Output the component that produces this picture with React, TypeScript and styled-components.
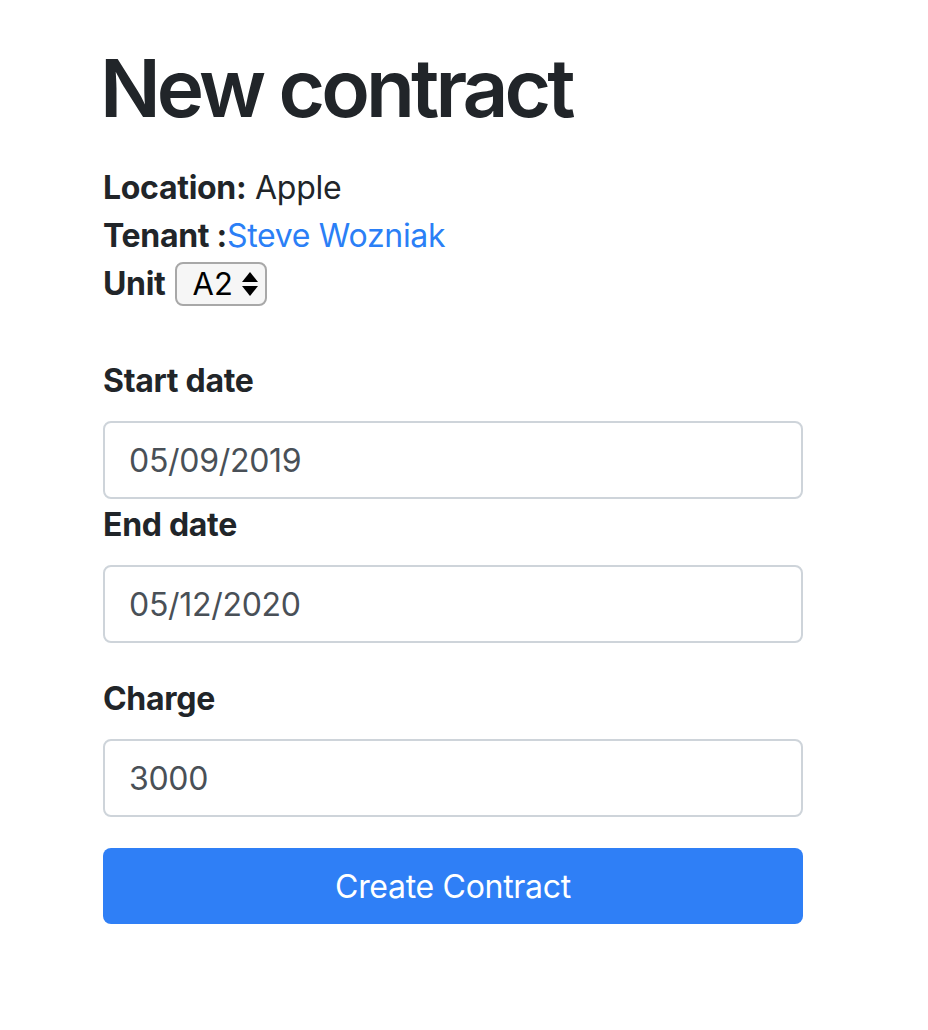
import React from "react";
import styled, { createGlobalStyle } from "styled-components";

const Global = createGlobalStyle`
  html, body { margin: 0; padding: 0; background: #fff; }
  body {
    font-family: Inter, "Helvetica Neue", Arial, sans-serif;
    color: #212529;
    font-size: 32px;
    line-height: 48px;
    letter-spacing: -0.3px;
  }
  * { box-sizing: border-box; }
`;

const Page = styled.div`
  width: 700px;
  margin-left: 103px;
  padding-top: 40px;
`;

const Title = styled.h1`
  margin: 0 0 28px -3px;
  font-size: 80px;
  line-height: 96px;
  font-weight: 600;
  letter-spacing: -3.9px;
`;

const InfoLine = styled.div`
  display: flex;
  align-items: center;
  height: 48px;
  white-space: pre;
`;

const Strong = styled.b`
  font-weight: 700;
`;

const Link = styled.a`
  color: #2b7ff6;
  text-decoration: none;
`;

const SelectWrap = styled.span`
  position: relative;
  display: inline-flex;
  margin-left: 9px;
`;

const Select = styled.select`
  appearance: none;
  -webkit-appearance: none;
  width: 92px;
  height: 44px;
  padding: 0 0 0 16px;
  border: 2px solid #a8a8a8;
  border-radius: 8px;
  background: #f6f6f6;
  color: #000;
  font-family: Inter, "Helvetica Neue", Arial, sans-serif;
  font-size: 31px;
  line-height: 40px;
`;

const Arrows = styled.svg`
  position: absolute;
  right: 8px;
  top: 9px;
  pointer-events: none;
`;

const Form = styled.form`
  margin-top: 49px;
  display: flex;
  flex-direction: column;
`;

const Group = styled.div<{ $gap: number }>`
  display: flex;
  flex-direction: column;
  margin-bottom: ${(p) => p.$gap}px;
`;

const Label = styled.label`
  font-weight: 700;
  margin-bottom: 16px;
  line-height: 48px;
`;

const Input = styled.input`
  width: 100%;
  height: 78px;
  padding: 0 24px;
  border: 2px solid #ced4da;
  border-radius: 8px;
  color: #495057;
  font-family: Inter, "Helvetica Neue", Arial, sans-serif;
  font-size: 32px;
  letter-spacing: -0.3px;
  background: #fff;
  outline: none;
`;

const Button = styled.button`
  width: 100%;
  height: 76px;
  border: none;
  border-radius: 8px;
  background: #2f7ff6;
  color: #fff;
  font-family: Inter, "Helvetica Neue", Arial, sans-serif;
  font-size: 32px;
  letter-spacing: -0.3px;
  cursor: pointer;
`;

export default function App() {
  return (
    <>
      <Global />
      <Page>
        <Title>New contract</Title>
        <InfoLine>
          <Strong>Location:</Strong> Apple
        </InfoLine>
        <InfoLine>
          <Strong>Tenant :</Strong>
          <Link href="#">Steve Wozniak</Link>
        </InfoLine>
        <InfoLine>
          <Strong>Unit</Strong>
          <SelectWrap>
            <Select defaultValue="A2">
              <option>A1</option>
              <option>A2</option>
              <option>A3</option>
            </Select>
            <Arrows width="18" height="26" viewBox="0 0 18 26">
              <path d="M9 1 L17 11 L1 11 Z" fill="#000" />
              <path d="M9 25 L17 15 L1 15 Z" fill="#000" />
            </Arrows>
          </SelectWrap>
        </InfoLine>
        <Form onSubmit={(e) => e.preventDefault()}>
          <Group $gap={2}>
            <Label>Start date</Label>
            <Input defaultValue="05/09/2019" />
          </Group>
          <Group $gap={32}>
            <Label>End date</Label>
            <Input defaultValue="05/12/2020" />
          </Group>
          <Group $gap={31}>
            <Label>Charge</Label>
            <Input defaultValue="3000" />
          </Group>
          <Button type="submit">Create Contract</Button>
        </Form>
      </Page>
    </>
  );
}
